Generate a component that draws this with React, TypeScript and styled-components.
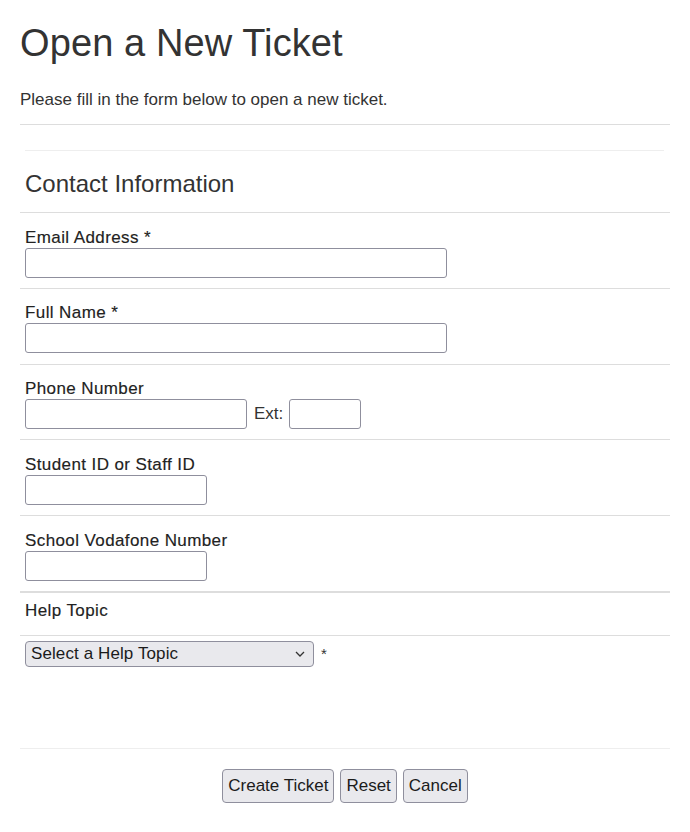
import React from "react";
import styled, { createGlobalStyle } from "styled-components";

const Global = createGlobalStyle`
  html, body { margin: 0; padding: 0; background: #fff; }
  body {
    font-family: "Liberation Sans", Arial, Helvetica, sans-serif;
    font-size: 17px;
    color: #333;
  }
`;

const Page = styled.div`
  padding: 0 20px;
  display: flex;
  flex-direction: column;
`;

const Title = styled.h1`
  margin: 21px 0 0;
  font-size: 38px;
  line-height: 44px;
  font-weight: normal;
  letter-spacing: 0.1px;
  color: #333;
`;

const Intro = styled.p`
  margin: 25px 0 0;
  font-size: 17px;
  line-height: 20px;
  color: #333;
`;

const Rule = styled.div<{ $light?: boolean; $inset?: boolean; $top: number }>`
  height: 1px;
  background: ${(p) => (p.$light ? "#eee" : "#ddd")};
  margin: ${(p) => p.$top}px ${(p) => (p.$inset ? "6px" : "0")} 0 ${(p) => (p.$inset ? "5px" : "0")};
`;

const SectionTitle = styled.h2`
  margin: 19px 0 0;
  padding: 0 5px 14px;
  font-size: 24px;
  line-height: 28px;
  font-weight: normal;
  color: #333;
  border-bottom: 1px solid #ddd;
`;

const FieldRow = styled.div`
  display: flex;
  flex-direction: column;
  align-items: flex-start;
  padding: 14.5px 5px 10.3px;
  border-bottom: 1px solid #ddd;
`;

const Label = styled.label`
  display: block;
  font-size: 17px;
  line-height: 20px;
  font-weight: normal;
  letter-spacing: 0.4px;
  color: #222;
  -webkit-text-stroke: 0.15px #222;
`;

const InputLine = styled.div`
  display: flex;
  align-items: center;
  gap: 6px;
`;

const TextInput = styled.input<{ $w: number }>`
  box-sizing: border-box;
  width: ${(p) => p.$w}px;
  height: 30px;
  border: 1px solid #8f8f9d;
  border-radius: 3px;
  background: #fff;
  margin: 0;
  padding: 2px 4px;
  font: inherit;
`;

const ExtLabel = styled.span`
  font-size: 17px;
  line-height: 20px;
  color: #333;
  margin-left: 1px;
`;

const TopicHead = styled.div`
  border-top: 1px solid #ddd;
  border-bottom: 1px solid #ddd;
  padding: 8px 5px 14px;
`;

const TopicRow = styled.div`
  display: flex;
  align-items: flex-start;
  gap: 7px;
  padding: 5px 5px 0;
  height: 107px;
  border-bottom: 1px solid #eee;
`;

const SelectBox = styled.div`
  box-sizing: border-box;
  width: 289px;
  height: 26px;
  border: 1px solid #8f8f9d;
  border-radius: 4px;
  background: #e9e9ed;
  display: flex;
  align-items: center;
  justify-content: space-between;
  padding: 0 8px 0 5px;
  font-size: 17px;
  letter-spacing: 0.1px;
  color: #1b1b1b;
`;

const Star = styled.span`
  font-size: 15px;
  line-height: 26px;
  color: #333;
`;

const Actions = styled.div`
  display: flex;
  justify-content: center;
  gap: 6px;
  padding-top: 20px;
`;

const Button = styled.button`
  box-sizing: border-box;
  height: 34px;
  padding: 0 5px;
  border: 1px solid #8f8f9d;
  border-radius: 4px;
  background: #e9e9ed;
  font-family: inherit;
  font-size: 17px;
  color: #1b1b1b;
`;

const fields: { label: string; width: number }[] = [
  { label: "Email Address *", width: 422 },
  { label: "Full Name *", width: 422 },
];

export default function App() {
  return (
    <>
      <Global />
      <Page>
        <Title>Open a New Ticket</Title>
        <Intro>Please fill in the form below to open a new ticket.</Intro>
        <Rule $top={14} />
        <Rule $top={25} $light $inset />
        <SectionTitle>Contact Information</SectionTitle>
        {fields.map((f) => (
          <FieldRow key={f.label}>
            <Label>{f.label}</Label>
            <TextInput $w={f.width} />
          </FieldRow>
        ))}
        <FieldRow>
          <Label>Phone Number</Label>
          <InputLine>
            <TextInput $w={222} />
            <ExtLabel>Ext:</ExtLabel>
            <TextInput $w={72} />
          </InputLine>
        </FieldRow>
        <FieldRow>
          <Label>Student ID or Staff ID</Label>
          <TextInput $w={182} />
        </FieldRow>
        <FieldRow>
          <Label>School Vodafone Number</Label>
          <TextInput $w={182} />
        </FieldRow>
        <TopicHead>
          <Label>Help Topic</Label>
        </TopicHead>
        <TopicRow>
          <SelectBox>
            <span>Select a Help Topic</span>
            <svg width="10" height="6" viewBox="0 0 10 6" fill="none">
              <path d="M1 1l4 4 4-4" stroke="#333" strokeWidth="1.3" />
            </svg>
          </SelectBox>
          <Star>*</Star>
        </TopicRow>
        <Actions>
          <Button>Create Ticket</Button>
          <Button>Reset</Button>
          <Button>Cancel</Button>
        </Actions>
      </Page>
    </>
  );
}
